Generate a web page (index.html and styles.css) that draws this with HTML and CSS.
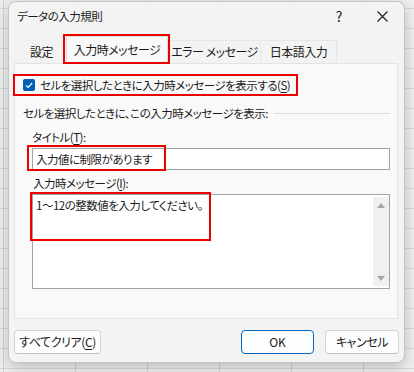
FILE: index.html
```html
<!DOCTYPE html>
<html lang="ja">
<head>
<meta charset="utf-8">
<title>データの入力規則</title>
<link rel="stylesheet" href="styles.css">
</head>
<body>
<div class="screen">
  <div class="dialog">
    <div class="titlebar">
      <span class="title">データの入力規則</span>
      <span class="tb-help">?</span>
      <svg class="tb-close" width="11" height="11" viewBox="0 0 11 11"><path d="M0.5 0.5 L10.5 10.5 M10.5 0.5 L0.5 10.5" stroke="#1b1b1b" stroke-width="1.1" fill="none"/></svg>
    </div>
    <div class="tabs">
      <div class="tab tab-1">設定</div>
      <div class="tab tab-active">入力時メッセージ</div>
      <div class="tab tab-3">エラー メッセージ</div>
      <div class="tab tab-4">日本語入力</div>
    </div>
    <div class="panel">
      <div class="check-row">
        <span class="checkbox"><svg width="12" height="12" viewBox="0 0 12 12"><path d="M3 6.3 L5.1 8.4 L9.2 4" stroke="#fff" stroke-width="1.2" fill="none"/></svg></span>
        <span>セルを選択したときに入力時メッセージを表示する(<u>S</u>)</span>
      </div>
      <div class="group-label"><span>セルを選択したときに、この入力時メッセージを表示:</span></div>
      <div class="fields">
        <div class="label label-title">タイトル(<u>T</u>):</div>
        <div class="input">入力値に制限があります<span class="mark mark-title"></span></div>
        <div class="label label-msg">入力時メッセージ(<u>I</u>):</div>
        <div class="textarea">
          <div class="ta-text">1～12の整数値を入力してください。</div>
          <div class="scrollbar">
            <span class="arrow-up"></span>
            <span class="arrow-down"></span>
          </div>
          <span class="mark mark-msg"></span>
        </div>
      </div>
    </div>
    <div class="footer">
      <button class="btn btn-clear">すべてクリア(<u>C</u>)</button>
      <button class="btn btn-ok">OK</button>
      <button class="btn btn-cancel">キャンセル</button>
    </div>
  </div>
</div>
</body>
</html>
```
FILE: styles.css
```css
* { box-sizing: border-box; }
html, body { margin: 0; padding: 0; }
body {
  font-family: "Noto Sans CJK JP", "Noto Sans", sans-serif;
  font-size: 11.5px;
  letter-spacing: -0.5px;
  line-height: 16px;
  color: #1b1b1b;
  font-feature-settings: "palt";
}
u { text-decoration-thickness: 1px; text-underline-offset: 2px; }

.screen {
  width: 414px;
  height: 372px;
  overflow: hidden;
  padding: 1px 0 0 8px;
  background-color: #efefef;
  background-image:
    linear-gradient(to right, #d2d2d2 1px, transparent 1px),
    linear-gradient(to bottom, #d8d8d8 1px, transparent 1px);
  background-size: 72px 20px;
  background-position: 3px 8px;
}

.dialog {
  width: 397px;
  height: 362px;
  border: 1px solid #c4c4c4;
  border-radius: 8px;
  background: #f3f3f3;
  box-shadow: 0 4px 14px rgba(0, 0, 0, 0.22);
  display: flex;
  flex-direction: column;
}

.titlebar {
  height: 28px;
  display: flex;
  align-items: center;
  padding: 0 16px 0 8px;
}
.title { flex: 1; }
.tb-help {
  width: 12px;
  text-align: center;
  font-size: 14px;
  letter-spacing: 0;
  margin-right: 32px;
}
.tb-close { display: block; }

.tabs {
  height: 33px;
  display: flex;
  align-items: flex-end;
  padding-left: 8px;
}
.tab {
  height: 23px;
  border: 1px solid #e6e6e6;
  border-bottom: none;
  text-align: center;
  line-height: 21px;
  font-size: 12px;
  white-space: nowrap;
}
.tab-1 { width: 49px; border-color: #f0f0f0; }
.tab-active {
  width: 102px;
  height: 28px;
  margin-bottom: -1px;
  background: #f9f9f9;
  border-color: #dedede;
  padding-top: 2px;
  position: relative;
  z-index: 1;
}
.tab-active::after {
  content: "";
  position: absolute;
  left: -4px;
  right: -3px;
  top: -3px;
  bottom: 0;
  border: 2px solid #ea0000;
}
.tab-3 { width: 93px; }
.tab-4 { width: 76px; border-left: none; }

.panel {
  margin: 0 6px 0 5px;
  height: 256px;
  border: 1px solid #e3e3e3;
  background: #f9f9f9;
}

.check-row {
  margin: 10px 0 0 -2px;
  width: max-content;
  height: 22px;
  border: 2px solid #ea0000;
  padding: 0 6px 0 8px;
  display: flex;
  align-items: center;
  gap: 5px;
  white-space: nowrap;
}
.checkbox {
  width: 12px;
  height: 12px;
  border-radius: 2px;
  background: #005fb8;
  display: block;
}
.checkbox svg { display: block; }

.group-label {
  margin-top: 9px;
  height: 16px;
  display: flex;
  align-items: center;
  padding: 0 7px 0 8px;
  white-space: nowrap;
}
.group-label::after {
  content: "";
  flex: 1;
  height: 1px;
  background: #dcdcdc;
  margin-left: 6px;
}

.fields { padding: 0 7px 0 17px; }
.label { line-height: 16px; }
.label-title { margin-top: 8px; }
.label-msg { margin-top: 5px; padding-left: 1px; }

.input {
  margin-top: 3px;
  height: 22px;
  border: 1px solid #a3a3a3;
  background: #fff;
  padding-left: 3px;
  line-height: 20px;
  position: relative;
}

.textarea {
  margin-top: 3px;
  height: 95px;
  border: 1px solid #a3a3a3;
  background: #fff;
  display: flex;
  position: relative;
}
.ta-text {
  flex: 1;
  padding: 2px 3px;
}
.scrollbar {
  width: 16px;
  margin: 2px 0;
  background: #f0f0f0;
  display: flex;
  flex-direction: column;
  justify-content: space-between;
  align-items: center;
  padding: 6px 0 5px;
}
.arrow-up, .arrow-down {
  width: 0;
  height: 0;
  border-left: 4px solid transparent;
  border-right: 4px solid transparent;
}
.arrow-up { border-bottom: 5px solid #a6a6a6; }
.arrow-down { border-top: 5px solid #a6a6a6; }

.mark {
  position: absolute;
  border: 2px solid #ea0000;
  pointer-events: none;
}
.mark-title { left: -6px; top: -4px; width: 139px; height: 26px; }
.mark-msg { left: -3px; top: -3px; width: 181px; height: 49px; }

.footer {
  margin-top: 11px;
  padding: 0 5px;
  display: flex;
  height: 24px;
}
.btn {
  height: 24px;
  font: inherit;
  font-size: 12px;
  letter-spacing: -0.4px;
  color: #1b1b1b;
  background: #fdfdfd;
  border: 1px solid #d3d3d3;
  border-bottom-color: #c2c2c2;
  border-radius: 4px;
  padding: 0;
  line-height: 20px;
}
.btn-clear { width: 87px; }
.btn-ok { width: 73px; margin-left: auto; border: 1px solid #0067c0; letter-spacing: 0; }
.btn-cancel { width: 74px; margin-left: 11px; }
```
